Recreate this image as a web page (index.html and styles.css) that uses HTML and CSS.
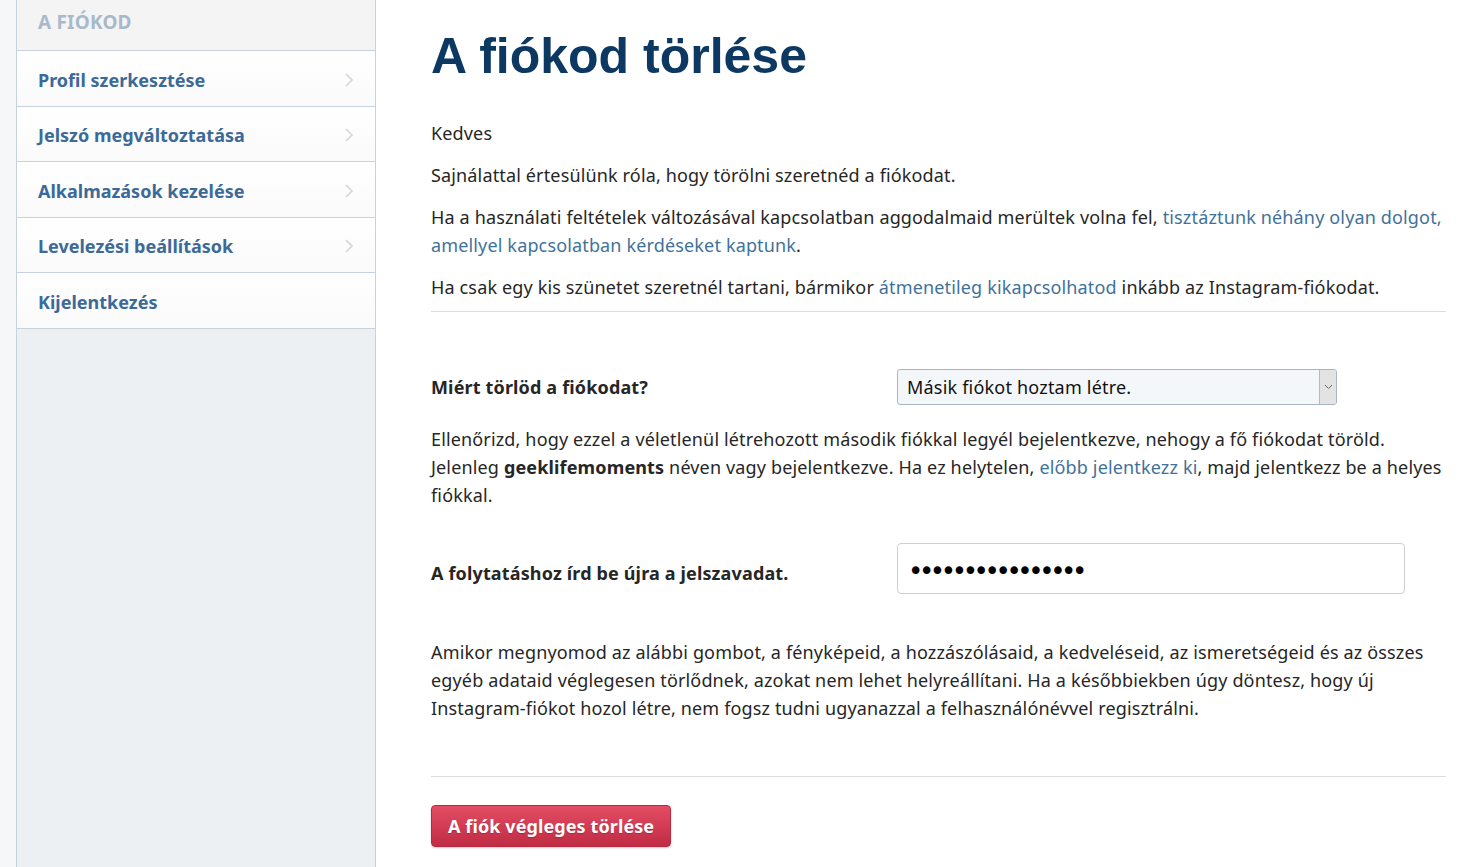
FILE: index.html
```html
<!DOCTYPE html>
<html lang="hu">

<head>
    <meta charset="UTF-8">
    <meta name="viewport" content="width=device-width, initial-scale=1.0">
    <title>A fiókod törlése</title>
    <link rel="stylesheet" href="styles.css">
</head>

<body>
    <div class="layout">
        <!-- Sidebar -->
        <aside class="sidebar">
            <div class="sidebarHeader">A fiókod</div>
            <ul class="sideMenu">
                <li><a href="#">Profil szerkesztése
                        <svg class="chevron" width="10" height="16" viewBox="0 0 10 16"><polyline points="2,2 8,8 2,14" /></svg></a></li>
                <li><a href="#">Jelszó megváltoztatása
                        <svg class="chevron" width="10" height="16" viewBox="0 0 10 16"><polyline points="2,2 8,8 2,14" /></svg></a></li>
                <li><a href="#">Alkalmazások kezelése
                        <svg class="chevron" width="10" height="16" viewBox="0 0 10 16"><polyline points="2,2 8,8 2,14" /></svg></a></li>
                <li><a href="#">Levelezési beállítások
                        <svg class="chevron" width="10" height="16" viewBox="0 0 10 16"><polyline points="2,2 8,8 2,14" /></svg></a></li>
                <li><a href="#">Kijelentkezés</a></li>
            </ul>
        </aside>

        <!-- Main content -->
        <main class="content">
            <h1>A fiókod törlése</h1>

            <div class="intro">
                <p>Kedves</p>
                <p>Sajnálattal értesülünk róla, hogy törölni szeretnéd a fiókodat.</p>
                <p>Ha a használati feltételek változásával kapcsolatban aggodalmaid merültek volna fel, <a href="#">tisztáztunk néhány olyan dolgot, amellyel kapcsolatban kérdéseket kaptunk</a>.</p>
                <p class="last">Ha csak egy kis szünetet szeretnél tartani, bármikor <a href="#">átmenetileg kikapcsolhatod</a> inkább az Instagram-fiókodat.</p>
            </div>

            <form class="deleteForm" onsubmit="return false;">
                <div class="fieldRow reasonRow">
                    <label for="reason">Miért törlöd a fiókodat?</label>
                    <div class="selectBox">
                        <select id="reason" name="reason">
                            <option>Másik fiókot hoztam létre.</option>
                            <option>Adatvédelmi aggályok</option>
                            <option>Túl elfoglalt vagyok</option>
                        </select>
                        <span class="selectArrow">
                            <svg width="9" height="6" viewBox="0 0 9 6"><polyline points="1,1 4.5,4.5 8,1" /></svg>
                        </span>
                    </div>
                </div>

                <p class="note">Ellenőrizd, hogy ezzel a véletlenül létrehozott második fiókkal legyél bejelentkezve, nehogy a fő fiókodat töröld. Jelenleg <strong>geeklifemoments</strong> néven vagy bejelentkezve. Ha ez helytelen, <a href="#">előbb jelentkezz ki</a>, majd jelentkezz be a helyes fiókkal.</p>

                <div class="fieldRow passwordRow">
                    <label for="password">A folytatáshoz írd be újra a jelszavadat.</label>
                    <input type="password" id="password" name="password" value="passwordpassword">
                </div>

                <p class="warning">Amikor megnyomod az alábbi gombot, a fényképeid, a hozzászólásaid, a kedveléseid, az ismeretségeid és az összes egyéb adataid véglegesen törlődnek, azokat nem lehet helyreállítani. Ha a későbbiekben úgy döntesz, hogy új Instagram-fiókot hozol létre, nem fogsz tudni ugyanazzal a felhasználónévvel regisztrálni.</p>

                <div class="actions">
                    <button type="submit" class="dangerButton">A fiók végleges törlése</button>
                </div>
            </form>
        </main>
    </div>
</body>

</html>
```

FILE: styles.css
```css
body {
    margin: 0;
    background: #f6f7f9;
    font-family: "Noto Sans", "Open Sans", sans-serif;
    font-size: 18px;
    letter-spacing: 0.15px;
    color: #262626;
}

.layout {
    display: flex;
    min-height: 100vh;
}

/* Sidebar */

.sidebar {
    width: 358px;
    margin-left: 16px;
    background: #edf0f3;
    border-left: 1px solid #c6d2de;
    border-right: 1px solid #c6d2de;
    flex-shrink: 0;
}

.sidebarHeader {
    height: 50px;
    line-height: 44px;
    padding-left: 21px;
    background: #f4f4f5;
    border-bottom: 1px solid #c6d2de;
    color: #a9b9ca;
    font-weight: bold;
    text-transform: uppercase;
    font-size: 19px;
    letter-spacing: 0.2px;
}

.sideMenu {
    list-style: none;
    margin: 0;
    padding: 0;
}

.sideMenu li {
    border-bottom: 1px solid #c6d2de;
    background: linear-gradient(#ffffff, #fafafa);
}

.sideMenu a {
    display: flex;
    align-items: center;
    justify-content: space-between;
    height: 54.5px;
    box-sizing: border-box;
    padding: 3px 21px 0;
    color: #3c6a98;
    font-weight: bold;
    font-size: 18px;
    letter-spacing: 0;
    text-decoration: none;
}

.chevron {
    fill: none;
    stroke: #d2d6da;
    stroke-width: 1.6;
}

/* Content */

.content {
    flex: 1;
    background: #fff;
    padding: 0 31px 0 55px;
}

h1 {
    font-family: "Liberation Sans", Arial, sans-serif;
    font-size: 50px;
    line-height: 60px;
    font-weight: bold;
    letter-spacing: 0;
    color: #0d3862;
    margin: 26px 0 33px;
}

p {
    margin: 0 0 14px;
    line-height: 28px;
}

a {
    color: #3f729b;
    text-decoration: none;
}

.intro {
    border-bottom: 1px solid #dcdcdc;
}

.intro .last {
    margin-bottom: 10px;
}

.fieldRow {
    display: flex;
    align-items: center;
}

.fieldRow label {
    width: 466px;
    font-weight: bold;
    flex-shrink: 0;
}

.reasonRow {
    margin-top: 57px;
}

.selectBox {
    display: flex;
    width: 440px;
    height: 36px;
    box-sizing: border-box;
    border: 1px solid #a9b5c1;
    border-radius: 3px;
    background: #f4f7f9;
    overflow: hidden;
}

.selectBox select {
    flex: 1;
    appearance: none;
    -webkit-appearance: none;
    border: none;
    background: transparent;
    font-family: inherit;
    font-size: 18px;
    letter-spacing: 0.2px;
    color: #111;
    padding: 0 9px;
    outline: none;
}

.selectArrow {
    width: 16px;
    display: flex;
    align-items: center;
    justify-content: center;
    background: #e3e3e3;
    border-left: 1px solid #b9b9b9;
}

.selectArrow svg {
    fill: none;
    stroke: #666;
    stroke-width: 1;
}

.note {
    margin: 20px 0 0;
}

.passwordRow {
    margin-top: 34px;
}

.passwordRow label {
    padding-top: 8px;
}

.passwordRow input {
    width: 508px;
    height: 51px;
    box-sizing: border-box;
    border: 1px solid #cfcfcf;
    border-radius: 4px;
    padding: 4px 10px 0;
    font-family: "DejaVu Sans", sans-serif;
    font-size: 26px;
    letter-spacing: -4.4px;
    color: #000;
}

.warning {
    margin: 44px 0 0;
}

.actions {
    margin-top: 54px;
    border-top: 1px solid #dcdcdc;
    padding-top: 28px;
}

.dangerButton {
    height: 42px;
    padding: 0 16px;
    border: 1px solid #b52a41;
    border-radius: 4px;
    background: linear-gradient(#e44d64, #bf2c44);
    box-shadow: 0 1px 2px rgba(0, 0, 0, 0.2);
    color: #fff;
    font-family: inherit;
    font-weight: bold;
    font-size: 18px;
    letter-spacing: 0.1px;
    text-shadow: 0 1px 1px rgba(0, 0, 0, 0.2);
    cursor: pointer;
}
```
